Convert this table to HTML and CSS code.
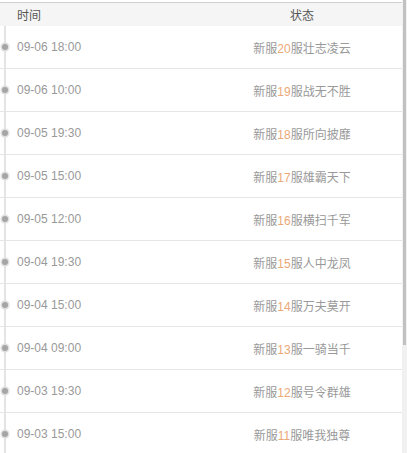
FILE: index.html
```html
<!DOCTYPE html>
<html lang="zh">
<head>
<meta charset="utf-8">
<link rel="stylesheet" href="styles.css">
</head>
<body>
<div class="page">
<div class="table">
  <div class="head">
    <div class="col time">时间</div>
    <div class="col status">状态</div>
  </div>
  <div class="rows">
    <div class="row"><div class="col time"><span class="dot"></span>09-06 18:00</div><div class="col status">新服<em>20</em>服壮志凌云</div></div>
    <div class="row"><div class="col time"><span class="dot"></span>09-06 10:00</div><div class="col status">新服<em>19</em>服战无不胜</div></div>
    <div class="row"><div class="col time"><span class="dot"></span>09-05 19:30</div><div class="col status">新服<em>18</em>服所向披靡</div></div>
    <div class="row"><div class="col time"><span class="dot"></span>09-05 15:00</div><div class="col status">新服<em>17</em>服雄霸天下</div></div>
    <div class="row"><div class="col time"><span class="dot"></span>09-05 12:00</div><div class="col status">新服<em>16</em>服横扫千军</div></div>
    <div class="row"><div class="col time"><span class="dot"></span>09-04 19:30</div><div class="col status">新服<em>15</em>服人中龙凤</div></div>
    <div class="row"><div class="col time"><span class="dot"></span>09-04 15:00</div><div class="col status">新服<em>14</em>服万夫莫开</div></div>
    <div class="row"><div class="col time"><span class="dot"></span>09-04 09:00</div><div class="col status">新服<em>13</em>服一骑当千</div></div>
    <div class="row"><div class="col time"><span class="dot"></span>09-03 19:30</div><div class="col status">新服<em>12</em>服号令群雄</div></div>
    <div class="row"><div class="col time"><span class="dot"></span>09-03 15:00</div><div class="col status">新服<em>11</em>服唯我独尊</div></div>
  </div>
</div>
<div class="scrollbar"><div class="thumb"></div></div>
</div>
</body>
</html>
```
FILE: styles.css
```css
html, body {
  margin: 0;
  height: 453px;
  overflow: hidden;
}
body {
  font-family: "Liberation Sans", "Noto Sans CJK SC", sans-serif;
  font-size: 12px;
  background: #fff;
}
.page {
  display: flex;
  height: 453px;
}
.table {
  width: 402px;
  padding-top: 2px;
}
.scrollbar {
  width: 5px;
  background: #f1f1f1;
  padding: 0 1px;
  box-sizing: border-box;
  flex: none;
}
.thumb {
  height: 345px;
  background: #c1c1c1;
}
.head {
  display: grid;
  grid-template-columns: 1fr 1fr;
  height: 23px;
  align-items: center;
  background: #f5f5f5;
  border-top: 1px solid #d0d0d0;
  color: #555;
}
.rows {
  position: relative;
}
.rows::before {
  content: "";
  position: absolute;
  left: 4px;
  top: 0;
  bottom: 0;
  width: 2px;
  background: #e4e4e4;
}
.row {
  display: grid;
  grid-template-columns: 1fr 1fr;
  height: 42px;
  align-items: center;
  border-bottom: 1px solid #e6e6e6;
  color: #999;
}
.col.time {
  padding-left: 17px;
  position: relative;
}
.col.status {
  text-align: center;
  padding-left: 1px;
}
.dot {
  position: absolute;
  left: 2px;
  top: 50%;
  width: 6px;
  height: 6px;
  margin-top: -3px;
  border-radius: 50%;
  background: #a5a5a5;
  box-shadow: 0 0 1px 1.5px #dedede;
}
em {
  font-style: normal;
  color: #eba878;
}
```
